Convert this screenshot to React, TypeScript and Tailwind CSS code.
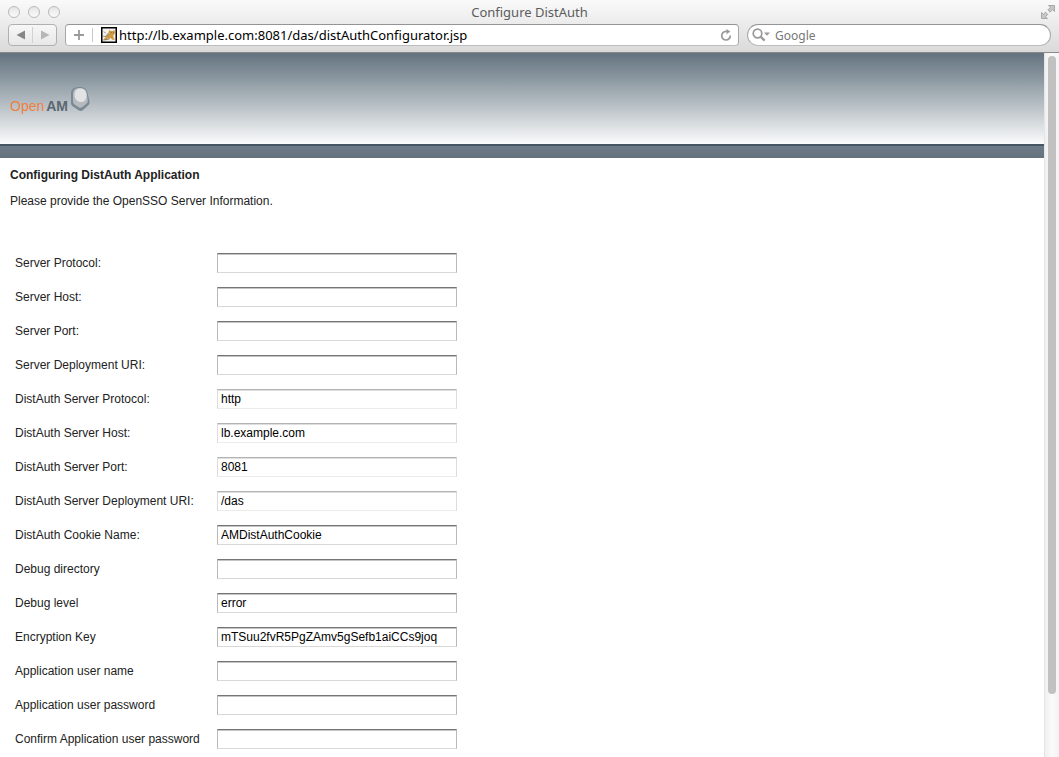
import React from "react";

type FieldProps = {
  id: string;
  label: string;
  value?: string;
  type?: string;
  readOnly?: boolean;
};

const fields: FieldProps[] = [
  { id: "server-protocol", label: "Server Protocol:" },
  { id: "server-host", label: "Server Host:" },
  { id: "server-port", label: "Server Port:" },
  { id: "server-uri", label: "Server Deployment URI:" },
  { id: "da-protocol", label: "DistAuth Server Protocol:", value: "http", readOnly: true },
  { id: "da-host", label: "DistAuth Server Host:", value: "lb.example.com", readOnly: true },
  { id: "da-port", label: "DistAuth Server Port:", value: "8081", readOnly: true },
  { id: "da-uri", label: "DistAuth Server Deployment URI:", value: "/das", readOnly: true },
  { id: "da-cookie", label: "DistAuth Cookie Name:", value: "AMDistAuthCookie" },
  { id: "debug-dir", label: "Debug directory" },
  { id: "debug-level", label: "Debug level", value: "error" },
  { id: "enc-key", label: "Encryption Key", value: "mTSuu2fvR5PgZAmv5gSefb1aiCCs9joq" },
  { id: "app-user", label: "Application user name" },
  { id: "app-pass", label: "Application user password", type: "password" },
  { id: "app-pass2", label: "Confirm Application user password", type: "password" },
];

function Field({ id, label, value = "", type = "text", readOnly = false }: FieldProps) {
  const tone = readOnly
    ? "border-t-[#b4b4b4] border-x-[#dcdcdc] border-b-[#ebebeb] shadow-[inset_0_1px_0_#dedede]"
    : "border-t-[#757575] border-x-[#b9b9b9] border-b-[#d8d8d8] shadow-[inset_0_1px_0_#c4c4c4]";
  return (
    <div className="flex h-5 items-center">
      <label htmlFor={id} className="w-[202px] shrink-0 whitespace-nowrap text-[#222]">
        {label}
      </label>
      <input
        id={id}
        type={type}
        defaultValue={value}
        readOnly={readOnly}
        className={`h-5 w-60 border bg-white px-[3px] text-black outline-none ${tone}`}
      />
    </div>
  );
}

function Favicon() {
  return (
    <svg className="h-4 w-4 shrink-0" viewBox="0 0 16 16" aria-hidden="true">
      <rect x="0.75" y="0.75" width="14.5" height="14.5" fill="#f3f1ec" stroke="#000" strokeWidth="1.5" />
      <path d="M8.200 3 9.800 4h2L13.600 3l.2 3.500-1.600 2 .6 2.500 1.200 1.800H11.500L9.500 11l-2.300.6-3 1H2.500l2-2.400L7 7.500z" fill="#d29a3e" />
      <path d="M2 8.800 4.500 9l2.300-2.800 1.200.7L5.500 10 2.500 10zM2 4l2 1 1.500 1.500L3.800 6z" fill="#9a958b" />
      <path d="m2.200 13 4-.5 2.500-.8M9.800 5.500h.9M12 5.500h.9" fill="none" stroke="#6d5a38" strokeWidth="0.8" />
    </svg>
  );
}

function Toolbar() {
  return (
    <header className="flex h-[53px] shrink-0 flex-col border-b border-[#8a8a8a] bg-linear-to-b from-[#fafafa] to-[#dadada] font-['Noto_Sans',sans-serif]">
      <div className="grid h-6 grid-cols-3 items-center px-1">
        <div className="flex gap-2 pl-1">
          {["Close", "Minimize", "Zoom"].map((name) => (
            <button
              key={name}
              type="button"
              aria-label={name}
              className="h-3 w-3 rounded-full border border-[#b9b9b9] bg-linear-to-b from-[#e6e6e6] to-[#fafafa]"
            />
          ))}
        </div>
        <h1 className="text-center text-[13px] leading-6 text-[#5c5c5c]">Configure DistAuth</h1>
        <button type="button" aria-label="Full screen" className="justify-self-end">
          <svg className="h-[14px] w-[14px]" viewBox="0 0 14 14" aria-hidden="true">
            <path d="M7.500.5h6v6L11.700 4.700 9 7.200 6.800 5l2.600-2.600zM.5 7.500l1.800 1.800L4.500 7.200l2.300 2.200-2.200 2.200 1.900 1.900h-6z" fill="#c6c6c6" stroke="#9c9c9c" strokeWidth="0.8" />
          </svg>
        </button>
      </div>
      <div className="flex h-[22px] px-2">
        <div className="flex w-[49px] items-center rounded-[4px] border border-[#b0b0b0] bg-linear-to-b from-[#f7f7f7] to-[#e8e8e8]">
          <button type="button" aria-label="Back" className="flex flex-1 justify-center">
            <svg className="h-[10px] w-[10px]" viewBox="0 0 10 10" aria-hidden="true">
              <path d="M9 .5v9L.5 5z" fill="#868686" />
            </svg>
          </button>
          <span className="h-4 w-px bg-[#d2d2d2]" />
          <button type="button" aria-label="Forward" className="flex flex-1 justify-center">
            <svg className="h-[10px] w-[10px]" viewBox="0 0 10 10" aria-hidden="true">
              <path d="M1 .5v9L9.500 5z" fill="#b6b6b6" />
            </svg>
          </button>
        </div>
        <div className="ml-2 flex flex-1 items-center rounded-[4px] border border-t-[#949494] border-x-[#a9a9a9] border-b-[#bdbdbd] bg-white pr-1.5">
          <button type="button" aria-label="Add bookmark" className="flex w-[26px] justify-center">
            <svg className="h-[10px] w-[10px]" viewBox="0 0 10 10" aria-hidden="true">
              <path d="M5 0v10M0 5h10" stroke="#9a9a9a" strokeWidth="1.800" />
            </svg>
          </button>
          <span className="mr-2 h-[14px] w-px bg-[#c9c9c9]" />
          <Favicon />
          <input
            type="text"
            aria-label="Address"
            defaultValue="http://lb.example.com:8081/das/distAuthConfigurator.jsp"
            className="ml-0.5 h-5 min-w-0 flex-1 bg-transparent text-[13px] text-black outline-none"
          />
          <button type="button" aria-label="Reload">
            <svg className="h-3 w-3" viewBox="0 0 12 12" aria-hidden="true">
              <path d="M10.300 6.500A4.300 4.300 0 1 1 6 2.400h1.500" fill="none" stroke="#999" strokeWidth="1.700" />
              <path d="M6.500 0v5.200L10.300 2.600z" fill="#999" />
            </svg>
          </button>
        </div>
        <div className="ml-2 flex w-[304px] items-center rounded-full border border-t-[#949494] border-x-[#a9a9a9] border-b-[#bdbdbd] bg-white pl-1">
          <svg className="h-[14px] w-[18px] shrink-0" viewBox="0 0 18 14" aria-hidden="true">
            <circle cx="5.500" cy="5.500" r="4.300" fill="none" stroke="#999" strokeWidth="1.700" />
            <path d="m8.600 8.600 4 4" stroke="#999" strokeWidth="2.200" />
            <path d="M12 4.500h6l-3 3.300z" fill="#999" />
          </svg>
          <input
            type="text"
            aria-label="Search"
            placeholder="Google"
            className="ml-[5px] h-5 min-w-0 flex-1 bg-transparent text-[12px] outline-none placeholder:text-[#777]"
          />
        </div>
      </div>
    </header>
  );
}

function Logo() {
  return (
    <div className="flex gap-0.5 text-[14px] leading-4">
      <span className="pt-3 text-[#f0803c]">Open</span>
      <span className="pt-3 font-bold text-[#5b6770]">AM</span>
      <svg className="h-[26px] w-5" viewBox="0 0 20 26" aria-hidden="true">
        <path d="M1 8C1 3 4 1 9 1s7.500 1.500 8.500 6l2 8.500c.3 1.700-.2 3-1.500 4l-5 4.500c-1.500 1.300-3 1.300-4.500.3L3 20.500C1.500 19.500 1 18.300 1 16.500z" fill="#7a8992" />
        <path d="M3 14V8.500C3 4 5 2 9.500 2S16 3.500 16.800 8l1 6c.2 1.800-.4 3-1.800 4l-3.500 3c-1.200 1-2.500 1-3.800.2L4.500 18.500C3.300 17.500 3 16 3 14z" fill="#b4babe" />
        <path d="M4.500 9C4.500 5 6.500 2.500 10.500 2.500S16.500 5.500 16.500 9.500 14.500 16 11 16 4.500 13 4.500 9z" fill="#e1e3e4" />
      </svg>
    </div>
  );
}

export default function App() {
  return (
    <div className="flex h-screen flex-col overflow-hidden bg-white font-['Liberation_Sans',Arial,sans-serif] text-[12px] leading-4">
      <Toolbar />
      <div className="flex min-h-0 flex-1">
        <main className="min-w-0 flex-1 overflow-hidden">
          <div className="h-[91px] bg-linear-to-b from-[#63737f] to-[#fbfcfc] pt-[33px] pl-[10px]">
            <Logo />
          </div>
          <div className="h-[14px] border-t-2 border-[#475761] bg-linear-to-b from-[#6c7b88] to-[#63727c]" />
          <section className="px-[10px] pt-[9px]">
            <h2 className="font-bold text-[#222]">Configuring DistAuth Application</h2>
            <p className="mt-[10px] text-[#222]">Please provide the OpenSSO Server Information.</p>
            <form className="mt-11 flex flex-col gap-[14px] pl-[5px]">
              {fields.map((field) => (
                <Field key={field.id} {...field} />
              ))}
            </form>
          </section>
        </main>
        <div className="w-[15px] shrink-0 border-l border-[#e4e4e4] bg-linear-to-r from-[#f0f0f0] via-[#fafafa] to-[#f3f3f3] px-[3px] pt-[3px]" aria-hidden="true">
          <div className="h-[91%] w-2 rounded-full bg-[#c1c1c1]" />
        </div>
      </div>
    </div>
  );
}
